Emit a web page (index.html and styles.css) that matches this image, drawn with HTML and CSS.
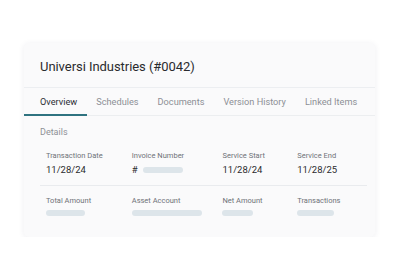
FILE: index.html
```html
<!DOCTYPE html>
<html lang="en">
<head>
    <meta charset="UTF-8">
    <title>Universi Industries</title>
    <link rel="stylesheet" href="styles.css">
</head>
<body>

<div class="card">
    <div class="card-header">
        <h1 class="title">Universi Industries (#0042)</h1>
    </div>

    <div class="tabs">
        <span class="tab active">Overview</span>
        <span class="tab">Schedules</span>
        <span class="tab">Documents</span>
        <span class="tab">Version History</span>
        <span class="tab">Linked Items</span>
    </div>

    <div class="details">
        <div class="section-label">Details</div>

        <div class="row">
            <div class="field col-1">
                <div class="label">Transaction Date</div>
                <div class="value">11/28/24</div>
            </div>
            <div class="field col-2">
                <div class="label">Invoice Number</div>
                <div class="value"># <span class="skeleton" style="width: 40px"></span></div>
            </div>
            <div class="field col-3">
                <div class="label">Service Start</div>
                <div class="value">11/28/24</div>
            </div>
            <div class="field col-4">
                <div class="label">Service End</div>
                <div class="value">11/28/25</div>
            </div>
        </div>

        <div class="row second">
            <div class="field col-1">
                <div class="label">Total Amount</div>
                <span class="skeleton" style="width: 39px"></span>
            </div>
            <div class="field col-2">
                <div class="label">Asset Account</div>
                <span class="skeleton" style="width: 70px"></span>
            </div>
            <div class="field col-3">
                <div class="label">Net Amount</div>
                <span class="skeleton" style="width: 31px"></span>
            </div>
            <div class="field col-4">
                <div class="label">Transactions</div>
                <span class="skeleton" style="width: 37px"></span>
            </div>
        </div>
    </div>
</div>

</body>
</html>
```

FILE: styles.css
```css
body {
    font-family: Roboto, "Liberation Sans", sans-serif;
    background-color: #ffffff;
    margin: 0;
    padding: 43px 24px 0 24px;
}

.card {
    width: 351px;
    height: 194px;
    background-color: #fafafb;
    border-radius: 5px;
    box-shadow: 0 1px 6px rgba(40, 40, 80, 0.08);
    box-sizing: border-box;
    overflow: hidden;
}

.card-header {
    height: 45px;
    padding: 2px 16px 0 16px;
    box-sizing: border-box;
    display: flex;
    align-items: center;
    border-bottom: 1px solid #eceef1;
}

.title {
    margin: 0;
    font-size: 13px;
    font-weight: 400;
    color: #2a2b2e;
    letter-spacing: -0.05px;
}

.tabs {
    display: flex;
    gap: 19px;
    height: 27px;
    padding-left: 16px;
    border-bottom: 1px solid #eceef0;
}

.tab {
    font-size: 9.2px;
    color: #8d9096;
    white-space: nowrap;
    display: flex;
    align-items: center;
    position: relative;
}

.tab.active {
    color: #2c2e33;
}

.tab.active::after {
    content: "";
    position: absolute;
    left: -16px;
    right: -10px;
    bottom: -1px;
    height: 2px;
    background-color: #2f7380;
}

.details {
    padding: 11px 8px 0 16px;
}

.section-label {
    font-size: 9px;
    line-height: 10px;
    color: #8e9196;
    margin-bottom: 14px;
}

.row {
    display: flex;
    padding: 0 0 9px 6px;
    border-bottom: 1px solid #e9ebee;
}

.row.second {
    border-bottom: none;
    padding-top: 10px;
}

.field {
    display: flex;
    flex-direction: column;
    align-items: flex-start;
}

.col-1 { width: 86px; }
.col-2 { width: 91px; }
.col-3 { width: 75px; }
.col-4 { width: 70px; }

.label {
    font-size: 7.5px;
    line-height: 10px;
    color: #6f7278;
    margin-bottom: 3px;
}

.row.second .label {
    margin-bottom: 4px;
}

.value {
    font-size: 9.5px;
    line-height: 12px;
    color: #2a2b2e;
    display: flex;
    align-items: center;
    gap: 5px;
}

.skeleton {
    display: inline-block;
    height: 6px;
    border-radius: 3px;
    background-color: #dde5ea;
}
```
